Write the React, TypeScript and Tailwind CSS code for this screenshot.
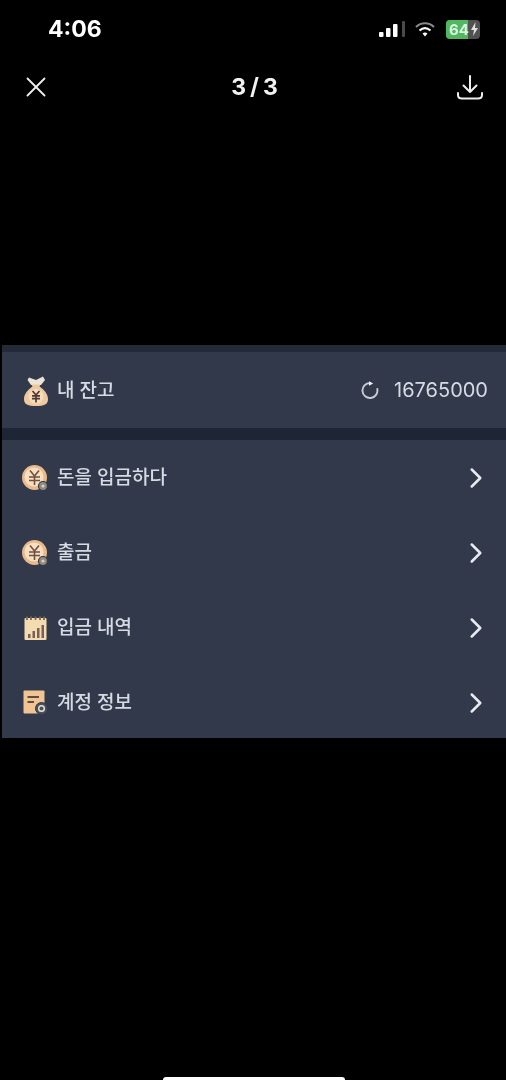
import React from 'react'
import { ChevronRight, X } from 'lucide-react'

const font = "font-['Inter','Noto_Sans_CJK_KR',sans-serif]"

function MoneyBag() {
  return (
    <svg width="24" height="31" viewBox="0 0 24 31">
      <path d="M5 2.5 L12 5 L19 1.5 L21 5 L17 10 H7 L3.5 5 Z" fill="#ece5d6" />
      <path d="M7.5 9.5 H16.5 L15.5 11.5 C20 14.5 24 19 24 24 C24 29.5 20 31 12 31 C4 31 0 29.5 0 24 C0 19 4 14.5 8.5 11.5 Z" fill="#eec9a0" />
      <circle cx="12" cy="21.5" r="7.5" fill="#f6dcbc" />
      <path d="M8.5 16 L12 20 L15.5 16 M8 20.8 H16 M8 23.6 H16 M12 20 V27.5" stroke="#4d3a32" strokeWidth="1.7" fill="none" />
    </svg>
  )
}

function CoinIcon() {
  return (
    <svg width="26" height="26" viewBox="0 0 26 26">
      <circle cx="12.5" cy="12.5" r="12.5" fill="#e9b98b" />
      <circle cx="12" cy="12" r="9.5" fill="#f8dfc0" />
      <path d="M8 5.5 L12.5 11 L17 5.5 M7 12 H18 M7 15.5 H18 M12.5 11 V20" stroke="#6e5243" strokeWidth="1.6" fill="none" />
      <circle cx="21" cy="21" r="4.5" fill="#8f8a7c" stroke="#31394b" strokeWidth="1.2" />
      <circle cx="21" cy="21" r="1.6" fill="#dcd2bb" />
    </svg>
  )
}

function ChartIcon() {
  return (
    <svg width="23" height="24" viewBox="0 0 23 24">
      <rect x="0.5" y="2" width="22" height="22" rx="1" fill="#f3dcb0" />
      <path d="M3 0.5 V4 M7 0.5 V4 M11.5 0.5 V4 M16 0.5 V4 M20 0.5 V4" stroke="#7f6650" strokeWidth="1.8" />
      <rect x="4" y="18" width="2.5" height="4" fill="#7b5f5c" />
      <rect x="8.5" y="15" width="2.5" height="7" fill="#7b5f5c" />
      <rect x="13" y="12" width="2.5" height="10" fill="#7b5f5c" />
      <rect x="17.5" y="9" width="2.5" height="13" fill="#7b5f5c" />
    </svg>
  )
}

function AccountIcon() {
  return (
    <svg width="25" height="25" viewBox="0 0 25 25">
      <rect x="0.5" y="0.5" width="21" height="23" rx="1" fill="#f0c493" />
      <path d="M4.5 7 H16 M4.5 12 H11" stroke="#5f4c42" strokeWidth="1.8" />
      <circle cx="18.5" cy="18.5" r="6" fill="#4a4f5c" stroke="#31394b" strokeWidth="1" />
      <circle cx="18.5" cy="18.5" r="2.8" fill="none" stroke="#e8e4da" strokeWidth="1.4" />
    </svg>
  )
}

function DownloadIcon() {
  return (
    <svg width="28" height="25" viewBox="0 0 28 25" fill="none" stroke="#eeeeee" strokeWidth="2" strokeLinecap="round" strokeLinejoin="round">
      <path d="M14 1 V17 M7.5 10.5 L14 17 L20.5 10.5" />
      <path d="M2 18 V20 Q2 23.5 6 23.5 H22 Q26 23.5 26 20 V18" />
    </svg>
  )
}

function RefreshIcon() {
  return (
    <svg width="18" height="18" viewBox="0 0 18 18" fill="none">
      <path d="M9 2 A7.5 7.5 0 1 0 16.3 8" stroke="#c9ccd4" strokeWidth="1.9" strokeLinecap="round" />
      <path d="M8 0.2 L12.2 2.4 L8 4.8 Z" fill="#f0f1f4" />
    </svg>
  )
}

function StatusIcons() {
  return (
    <div className="flex items-center">
      <svg width="27" height="18" viewBox="0 0 27 18">
        <rect x="0" y="12" width="4.5" height="5" rx="1" fill="#fff" />
        <rect x="7" y="8" width="4.5" height="9" rx="1" fill="#fff" />
        <rect x="14" y="4" width="4.5" height="13" rx="1" fill="#fff" />
        <rect x="23" y="1" width="3" height="16" rx="1" fill="#4a4a4a" />
      </svg>
      <svg className="ml-[9px]" width="20" height="17" viewBox="0 0 20 17">
        <path d="M1 6 C6 1 14 1 19 6" stroke="#8a8a8a" strokeWidth="2" fill="none" />
        <path d="M4.5 9.5 C8 6.5 12 6.5 15.5 9.5" stroke="#fff" strokeWidth="2.2" fill="none" />
        <path d="M7.5 12.5 L10 15.5 L12.5 12.5 C11 11.3 9 11.3 7.5 12.5 Z" fill="#fff" />
      </svg>
      <div className="relative ml-[11px] flex h-[19px] w-[34px] items-center overflow-hidden rounded-[4px] bg-[#4f524f]">
        <div className="absolute left-0 top-0 h-full w-[22px] bg-[#4fb860]" />
        <span className="relative pl-[3px] text-[15px] leading-none font-bold text-[#dcf3df]">64</span>
        <svg className="relative ml-[1px]" width="9" height="14" viewBox="0 0 9 14">
          <path d="M5.5 0 L1 8 H4 L3 14 L8 6 H5 Z" fill="#e0e0e0" />
        </svg>
      </div>
    </div>
  )
}

function MenuRow({ icon, label }: { icon: React.ReactNode; label: string }) {
  return (
    <div className="flex h-[75px] shrink-0 items-center pl-[20px] pr-[13px]">
      <div className="flex w-[26px] justify-center">{icon}</div>
      <span className="ml-[9px] flex-1 pt-[2px] text-[19px] font-medium text-[#d6dae3]">{label}</span>
      <ChevronRight size={34} strokeWidth={1.8} className="text-[#e8eaef]" />
    </div>
  )
}

export default function App() {
  return (
    <div className={`flex h-[1080px] w-[506px] flex-col overflow-hidden bg-black ${font} blur-[0.6px]`}>
      <div className="flex h-[58px] shrink-0 items-center justify-between pl-[48px] pr-[26px]">
        <span className="text-[23px] font-bold text-white">4:06</span>
        <StatusIcons />
      </div>
      <div className="flex h-[58px] shrink-0 items-center justify-between pl-[19px] pr-[22px]">
        <X size={34} strokeWidth={1.3} className="text-[#eeeeee]" />
        <span className="text-[23px] font-bold text-[#f2f2f2] [word-spacing:-1.5px]">3 / 3</span>
        <DownloadIcon />
      </div>

      <div className="mt-[229px] ml-[2px] flex h-[393px] shrink-0 flex-col overflow-hidden bg-[#31394b]">
        <div className="h-[7px] shrink-0 bg-[#232a38]" />
        <div className="flex h-[76px] shrink-0 items-center pl-[21px] pr-[18px]">
          <div className="flex w-[25px] justify-center"><MoneyBag /></div>
          <span className="ml-[9px] flex-1 pt-[2px] text-[19px] font-medium text-[#d6dae3]">내 잔고</span>
          <RefreshIcon />
          <span className="ml-[15px] text-[20px] text-[#d6dae3]">16765000</span>
        </div>
        <div className="h-[12px] shrink-0 bg-[#1e2535]" />
        <MenuRow icon={<CoinIcon />} label="돈을 입금하다" />
        <MenuRow icon={<CoinIcon />} label="출금" />
        <MenuRow icon={<ChartIcon />} label="입금 내역" />
        <MenuRow icon={<AccountIcon />} label="계정 정보" />
      </div>

      <div className="mt-auto ml-[163px] h-[3px] w-[182px] shrink-0 rounded-t-[3px] bg-white" />
    </div>
  )
}
